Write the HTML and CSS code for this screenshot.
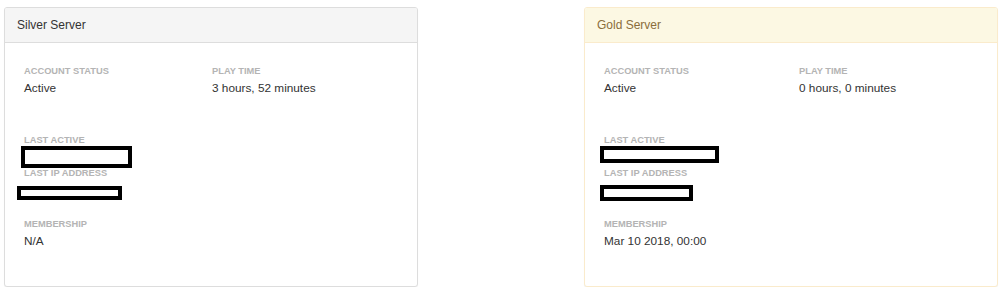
FILE: index.html
```html
<!DOCTYPE html>
<html>
<head>
<meta charset="utf-8">
<link rel="stylesheet" href="styles.css">
</head>
<body>
<div class="page">
  <div class="card card--silver">
    <div class="card-head">Silver Server</div>
    <div class="card-body">
      <div class="grid grid--silver">
        <div>
          <div class="label">Account Status</div>
          <div class="value">Active</div>
        </div>
        <div>
          <div class="label">Play Time</div>
          <div class="value">3 hours, 52 minutes</div>
        </div>
      </div>
      <div class="label label--gap">Last Active</div>
      <div class="slot slot--a"><span class="mask mask--s1"></span></div>
      <div class="label">Last IP Address</div>
      <div class="slot slot--b"><span class="mask mask--s2"></span></div>
      <div class="label">Membership</div>
      <div class="value">N/A</div>
    </div>
  </div>
  <div class="card card--gold">
    <div class="card-head">Gold Server</div>
    <div class="card-body">
      <div class="grid grid--gold">
        <div>
          <div class="label">Account Status</div>
          <div class="value">Active</div>
        </div>
        <div>
          <div class="label">Play Time</div>
          <div class="value">0 hours, 0 minutes</div>
        </div>
      </div>
      <div class="label label--gap">Last Active</div>
      <div class="slot slot--a"><span class="mask mask--g1"></span></div>
      <div class="label">Last IP Address</div>
      <div class="slot slot--b"><span class="mask mask--g2"></span></div>
      <div class="label">Membership</div>
      <div class="value">Mar 10 2018, 00:00</div>
    </div>
  </div>
</div>
</body>
</html>
```

FILE: styles.css
```css
html, body {
  margin: 0;
  padding: 0;
  background: #fff;
}
body {
  font-family: "Liberation Sans", Arial, sans-serif;
  color: #333;
  font-size: 12px;
}
.page {
  display: flex;
  justify-content: space-between;
  padding: 7px 2px 0 4px;
}
.card {
  width: 414px;
  height: 280px;
  box-sizing: border-box;
  border: 1px solid #ddd;
  border-radius: 3px;
  box-shadow: 0 1px 1px rgba(0,0,0,0.05);
  background: #fff;
  overflow: hidden;
}
.card-head {
  height: 34px;
  display: flex;
  align-items: center;
  padding-left: 12px;
  font-size: 12px;
  border-bottom: 1px solid #ddd;
  background: #f5f5f5;
  color: #333;
}
.card--gold {
  border-color: #faebcc;
}
.card--gold .card-head {
  background: #fcf8e3;
  color: #8a6d3b;
  border-bottom-color: #faebcc;
}
.card-body {
  padding: 23px 0 0 19px;
}
.grid {
  display: grid;
}
.grid--silver { grid-template-columns: 188px 1fr; }
.grid--gold { grid-template-columns: 195px 1fr; }
.label {
  font-size: 9.3px;
  line-height: 11px;
  height: 11px;
  font-weight: bold;
  text-transform: uppercase;
  color: #b4b4b4;
}
.label--gap {
  margin-top: 39px;
}
.value {
  margin-top: 3px;
  font-size: 11.8px;
  line-height: 16px;
  color: #333;
}
.slot {
  display: flow-root;
}
.slot--a { height: 22px; }
.slot--b { height: 40px; }
.mask {
  display: block;
  box-sizing: border-box;
  border: 4px solid #000;
  background: #fff;
}
.mask--s1 { width: 111px; height: 22px; margin-left: -3px; }
.mask--s2 { width: 105px; height: 14px; margin-left: -7px; margin-top: 7px; }
.mask--g1 { width: 119px; height: 17px; margin-left: -4px; }
.mask--g2 { width: 93px; height: 16px; margin-left: -4px; margin-top: 6px; }
```
